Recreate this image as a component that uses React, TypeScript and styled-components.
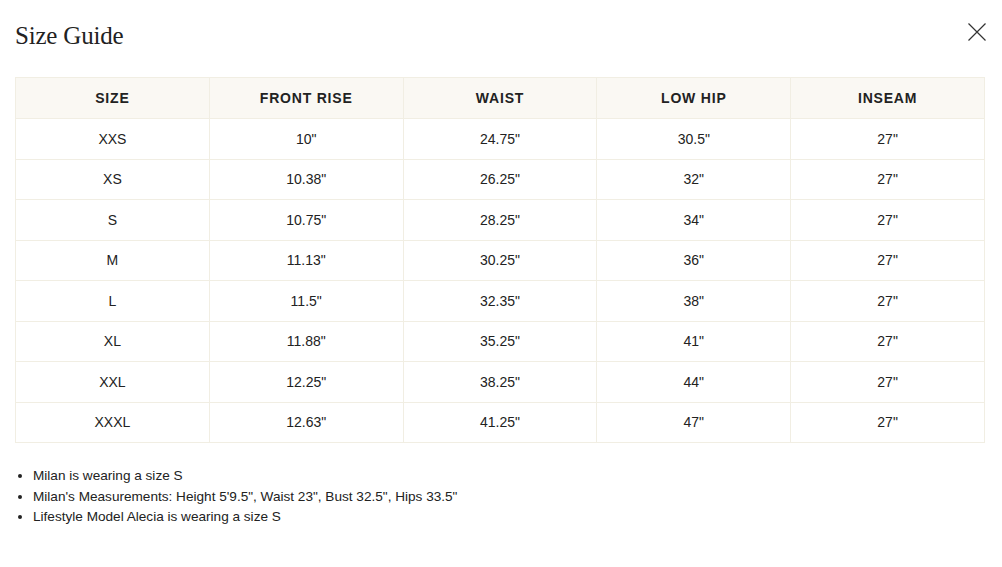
import React from "react";
import styled, { createGlobalStyle } from "styled-components";

const Global = createGlobalStyle`
  html, body { margin: 0; padding: 0; background: #fff; }
  body { font-family: "Liberation Sans", Arial, sans-serif; color: #222; }
`;

const Modal = styled.div`
  padding: 18px 17px 20px 15px;
  display: flex;
  flex-direction: column;
`;

const Header = styled.div`
  display: flex;
  justify-content: space-between;
  align-items: center;
  height: 36px;
`;

const Title = styled.h2`
  margin: 0;
  font-family: "Liberation Serif", "Times New Roman", serif;
  font-weight: 400;
  font-size: 25px;
  color: #222;
  letter-spacing: -0.2px;
`;

const Close = styled.button`
  border: 0;
  background: none;
  padding: 0;
  width: 18px;
  height: 18px;
  margin-right: -1px;
  margin-top: -8px;
  cursor: pointer;
  display: flex;
`;

const Table = styled.table`
  margin-top: 23px;
  width: 100%;
  border-collapse: collapse;
  table-layout: fixed;
  border: 1px solid #f1eee3;
`;

const Th = styled.th`
  background: #faf8f3;
  height: 40px;
  font-size: 14px;
  font-weight: 700;
  letter-spacing: 0.8px;
  color: #222;
  text-align: center;
  border: 1px solid #f1eee3;
  border-top: 0;
  padding: 0;
`;

const Td = styled.td`
  height: 39.5px;
  font-size: 14px;
  color: #222;
  text-align: center;
  border: 1px solid #f1eee3;
  padding: 0;
`;

const Notes = styled.ul`
  margin: 23px 0 0 0;
  padding-left: 18px;
  font-size: 13.6px;
  line-height: 20.5px;
  color: #222;
`;

const rows = [
  ["XXS", '10"', '24.75"', '30.5"', '27"'],
  ["XS", '10.38"', '26.25"', '32"', '27"'],
  ["S", '10.75"', '28.25"', '34"', '27"'],
  ["M", '11.13"', '30.25"', '36"', '27"'],
  ["L", '11.5"', '32.35"', '38"', '27"'],
  ["XL", '11.88"', '35.25"', '41"', '27"'],
  ["XXL", '12.25"', '38.25"', '44"', '27"'],
  ["XXXL", '12.63"', '41.25"', '47"', '27"'],
];

const heads = ["SIZE", "FRONT RISE", "WAIST", "LOW HIP", "INSEAM"];

export default function App() {
  return (
    <>
      <Global />
      <Modal>
        <Header>
          <Title>Size Guide</Title>
          <Close aria-label="Close">
            <svg width="18" height="18" viewBox="0 0 18 18">
              <path d="M0.5 0.5 L17.5 17.5 M17.5 0.5 L0.5 17.5" stroke="#333" strokeWidth="1.2" fill="none" />
            </svg>
          </Close>
        </Header>
        <Table>
          <thead>
            <tr>
              {heads.map((h) => (
                <Th key={h}>{h}</Th>
              ))}
            </tr>
          </thead>
          <tbody>
            {rows.map((r) => (
              <tr key={r[0]}>
                {r.map((c, i) => (
                  <Td key={i}>{c}</Td>
                ))}
              </tr>
            ))}
          </tbody>
        </Table>
        <Notes>
          <li>Milan is wearing a size S</li>
          <li>Milan's Measurements: Height 5'9.5", Waist 23", Bust 32.5", Hips 33.5"</li>
          <li>Lifestyle Model Alecia is wearing a size S</li>
        </Notes>
      </Modal>
    </>
  );
}
